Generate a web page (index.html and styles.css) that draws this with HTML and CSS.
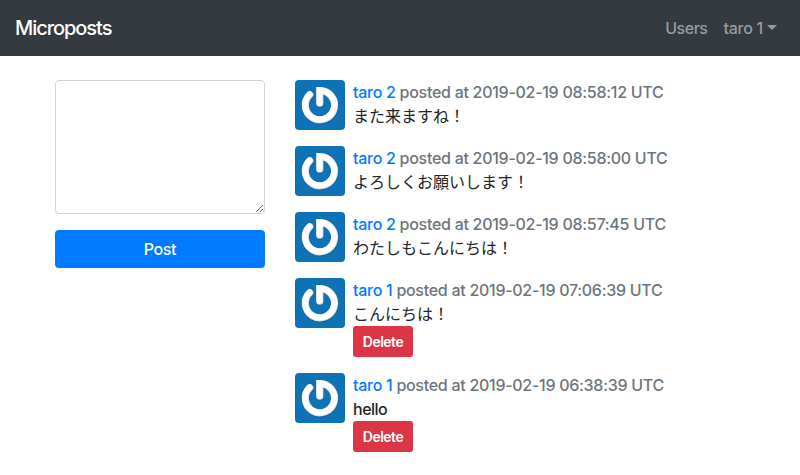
FILE: index.html
```html
<!DOCTYPE html>
<html lang="ja">
<head>
<meta charset="utf-8">
<title>Microposts</title>
<link rel="stylesheet" href="styles.css">
</head>
<body>
<svg class="defs" width="0" height="0" aria-hidden="true">
  <symbol id="avatar" viewBox="0 0 50 50">
    <rect width="50" height="50" fill="#0d72b6"/>
    <g fill="none" stroke-width="7.2" stroke-linecap="round" stroke-linejoin="miter">
      <path d="M14.8 14.7A14.6 14.6 0 1 0 24.8 10.6V23.2" stroke="#075b96" opacity=".55" transform="translate(.6 .9)"/>
      <path d="M14.8 14.7A14.6 14.6 0 1 0 24.8 10.6V23.2" stroke="#dedbd4"/>
      <path d="M14.8 14.7A14.6 14.6 0 1 0 24.8 10.6V23.2" stroke="#fff" stroke-width="6" transform="translate(-.3 -.4)"/>
    </g>
  </symbol>
</svg>
<header class="navbar">
  <a class="brand" href="#">Microposts</a>
  <nav class="nav">
    <a class="nav-link" href="#">Users</a>
    <a class="nav-link dropdown" href="#">taro 1</a>
  </nav>
</header>
<main class="container">
  <form class="post-form">
    <textarea class="form-control"></textarea>
    <button class="btn btn-primary" type="button">Post</button>
  </form>
  <ul class="posts">
    <li class="post">
      <svg class="avatar"><use href="#avatar"/></svg>
      <div class="body">
        <div class="meta"><a href="#">taro 2</a> posted at 2019-02-19 08:58:12 UTC</div>
        <p>また来ますね！</p>
      </div>
    </li>
    <li class="post">
      <svg class="avatar"><use href="#avatar"/></svg>
      <div class="body">
        <div class="meta"><a href="#">taro 2</a> posted at 2019-02-19 08:58:00 UTC</div>
        <p>よろしくお願いします！</p>
      </div>
    </li>
    <li class="post">
      <svg class="avatar"><use href="#avatar"/></svg>
      <div class="body">
        <div class="meta"><a href="#">taro 2</a> posted at 2019-02-19 08:57:45 UTC</div>
        <p>わたしもこんにちは！</p>
      </div>
    </li>
    <li class="post">
      <svg class="avatar"><use href="#avatar"/></svg>
      <div class="body">
        <div class="meta"><a href="#">taro 1</a> posted at 2019-02-19 07:06:39 UTC</div>
        <p>こんにちは！</p>
        <button class="btn btn-danger" type="button">Delete</button>
      </div>
    </li>
    <li class="post">
      <svg class="avatar"><use href="#avatar"/></svg>
      <div class="body">
        <div class="meta"><a href="#">taro 1</a> posted at 2019-02-19 06:38:39 UTC</div>
        <p class="latin">hello</p>
        <button class="btn btn-danger" type="button">Delete</button>
      </div>
    </li>
  </ul>
</main>
</body>
</html>
```
FILE: styles.css
```css
* { box-sizing: border-box; }
body {
  margin: 0;
  height: 475px;
  overflow: hidden;
  background: #fff;
  color: #212529;
  font: 500 16px/24px Inter, "Noto Sans CJK JP", sans-serif;
  letter-spacing: -0.28px;
}
a { color: #007bff; text-decoration: none; }
.defs { display: none; }
.navbar {
  display: flex;
  align-items: center;
  justify-content: space-between;
  height: 56px;
  padding: 0 15px;
  background: #343a40;
}
.brand { color: #fff; font-size: 20px; line-height: 30px; letter-spacing: -1.05px; }
.nav { display: flex; letter-spacing: -0.5px; }
.nav-link { padding: 8px; color: #999c9f; }
.nav-link.dropdown { letter-spacing: -0.25px; }
.dropdown::after {
  content: "";
  display: inline-block;
  margin-left: 4px;
  vertical-align: 4px;
  border-top: 5px solid;
  border-left: 5px solid transparent;
  border-right: 5px solid transparent;
}
.container {
  display: grid;
  grid-template-columns: 210px 1fr;
  gap: 30px;
  padding: 24px 55px 0;
}
.form-control {
  display: block;
  width: 100%;
  height: 134px;
  margin: 0 0 16px;
  padding: 6px 12px;
  border: 1px solid #ced4da;
  border-radius: 4px;
  resize: vertical;
}
.btn {
  display: block;
  border: 0;
  color: #fff;
  font-family: inherit;
  font-weight: 500;
  letter-spacing: -0.4px;
}
.btn-primary {
  width: 100%;
  height: 38px;
  border-radius: 4px;
  background: #007bff;
  font-size: 16px;
}
.btn-danger {
  width: 60px;
  height: 31px;
  padding: 0;
  border-radius: 3px;
  background: #dc3545;
  font-size: 14px;
  font-weight: 600;
  letter-spacing: -0.5px;
}
.posts { margin: 0; padding: 0; list-style: none; }
.post { display: flex; gap: 8px; margin-bottom: 16px; }
.avatar { flex: none; width: 50px; height: 50px; border-radius: 4px; }
.meta { color: #6c757d; }
.post p { margin: 0; font-weight: 400; letter-spacing: 0; }
.post .latin { font-weight: 500; letter-spacing: -0.5px; }
```
